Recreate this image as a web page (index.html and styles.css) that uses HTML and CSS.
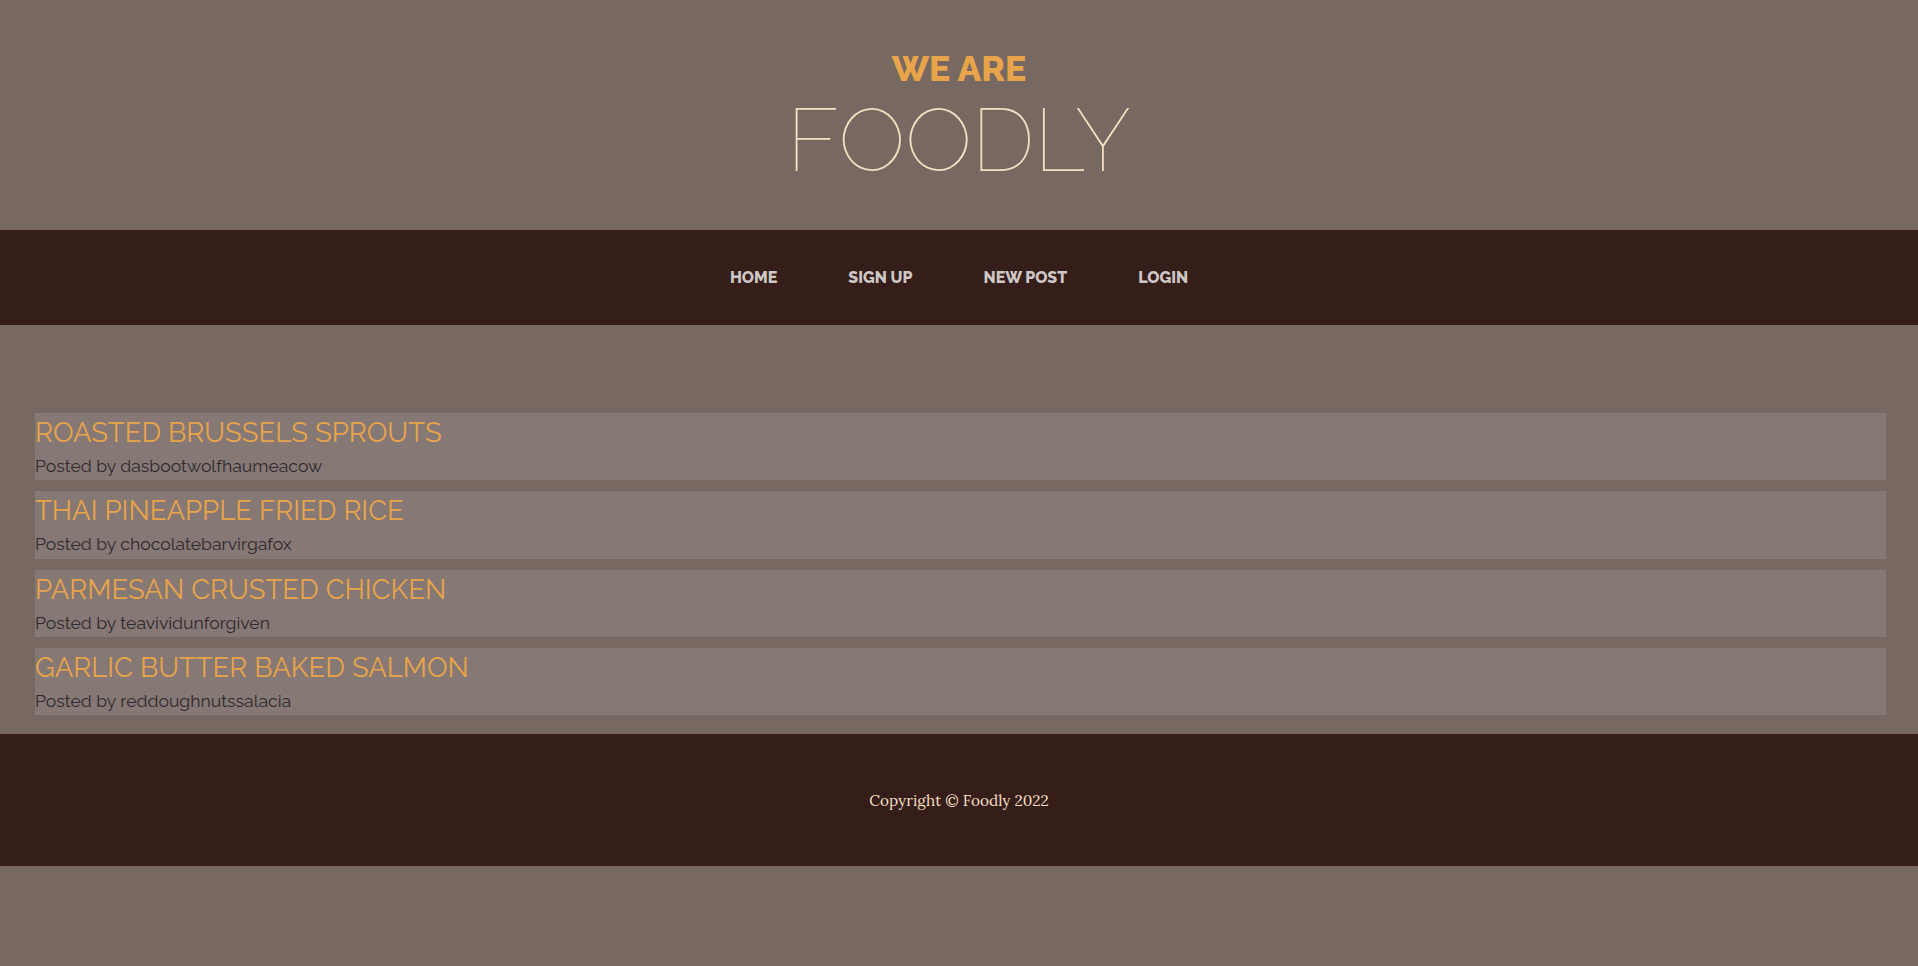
FILE: index.html
```html
<!DOCTYPE html>
<html lang="en">
<head>
<meta charset="utf-8">
<title>Foodly</title>
<link rel="stylesheet" href="styles.css">
</head>
<body>
<header class="hero">
  <h2 class="hero-sub">WE ARE</h2>
  <h1 class="hero-title">FOODLY</h1>
</header>
<nav class="nav">
  <a class="nav-link" href="#">HOME</a>
  <a class="nav-link" href="#">SIGN UP</a>
  <a class="nav-link" href="#">NEW POST</a>
  <a class="nav-link" href="#">LOGIN</a>
</nav>
<main class="posts">
  <article class="post">
    <h3 class="post-title">ROASTED BRUSSELS SPROUTS</h3>
    <p class="post-meta">Posted by dasbootwolfhaumeacow</p>
  </article>
  <article class="post">
    <h3 class="post-title">THAI PINEAPPLE FRIED RICE</h3>
    <p class="post-meta">Posted by chocolatebarvirgafox</p>
  </article>
  <article class="post">
    <h3 class="post-title">PARMESAN CRUSTED CHICKEN</h3>
    <p class="post-meta">Posted by teavividunforgiven</p>
  </article>
  <article class="post">
    <h3 class="post-title">GARLIC BUTTER BAKED SALMON</h3>
    <p class="post-meta">Posted by reddoughnutssalacia</p>
  </article>
</main>
<footer class="footer">
  <p class="copyright">Copyright © Foodly 2022</p>
</footer>
</body>
</html>
```
FILE: styles.css
```css
* { box-sizing: border-box; }
html, body {
  margin: 0;
  padding: 0;
  background: #776961;
  font-family: "Raleway", "Lato", "Open Sans", sans-serif;
}
.hero {
  height: 230px;
  display: flex;
  flex-direction: column;
  align-items: center;
  padding-top: 47px;
}
.hero-sub {
  margin: 0;
  font-size: 35.5px;
  font-weight: 800;
  color: #e8a44a;
  line-height: 44px;
}
.hero-title {
  margin: 4px 0 0;
  font-size: 88px;
  font-weight: 100;
  color: #f3dfc1;
  line-height: 90px;
}
.nav {
  height: 95px;
  background: #351e1a;
  display: flex;
  justify-content: center;
  align-items: center;
  gap: 71px;
}
.nav-link {
  color: #cfc6c6;
  text-decoration: none;
  font-weight: 800;
  font-size: 16px;
}
.posts {
  padding: 88px 32px 19px 35px;
  display: flex;
  flex-direction: column;
  gap: 11px;
}
.post {
  background: #867874;
  height: 67.3px;
}
.post-title {
  margin: 0;
  font-size: 27.5px;
  font-weight: 400;
  color: #e8a44a;
  line-height: 39px;
}
.post-meta {
  margin: 0;
  font-size: 17.6px;
  color: #2e2a2f;
  line-height: 28px;
}
.footer {
  height: 132px;
  background: #351e1a;
  display: flex;
  align-items: center;
  justify-content: center;
}
.copyright {
  margin: 0;
  font-family: "Lora", "DejaVu Serif", "Liberation Serif", serif;
  font-size: 15.4px;
  color: #f3dfc1;
}
```
